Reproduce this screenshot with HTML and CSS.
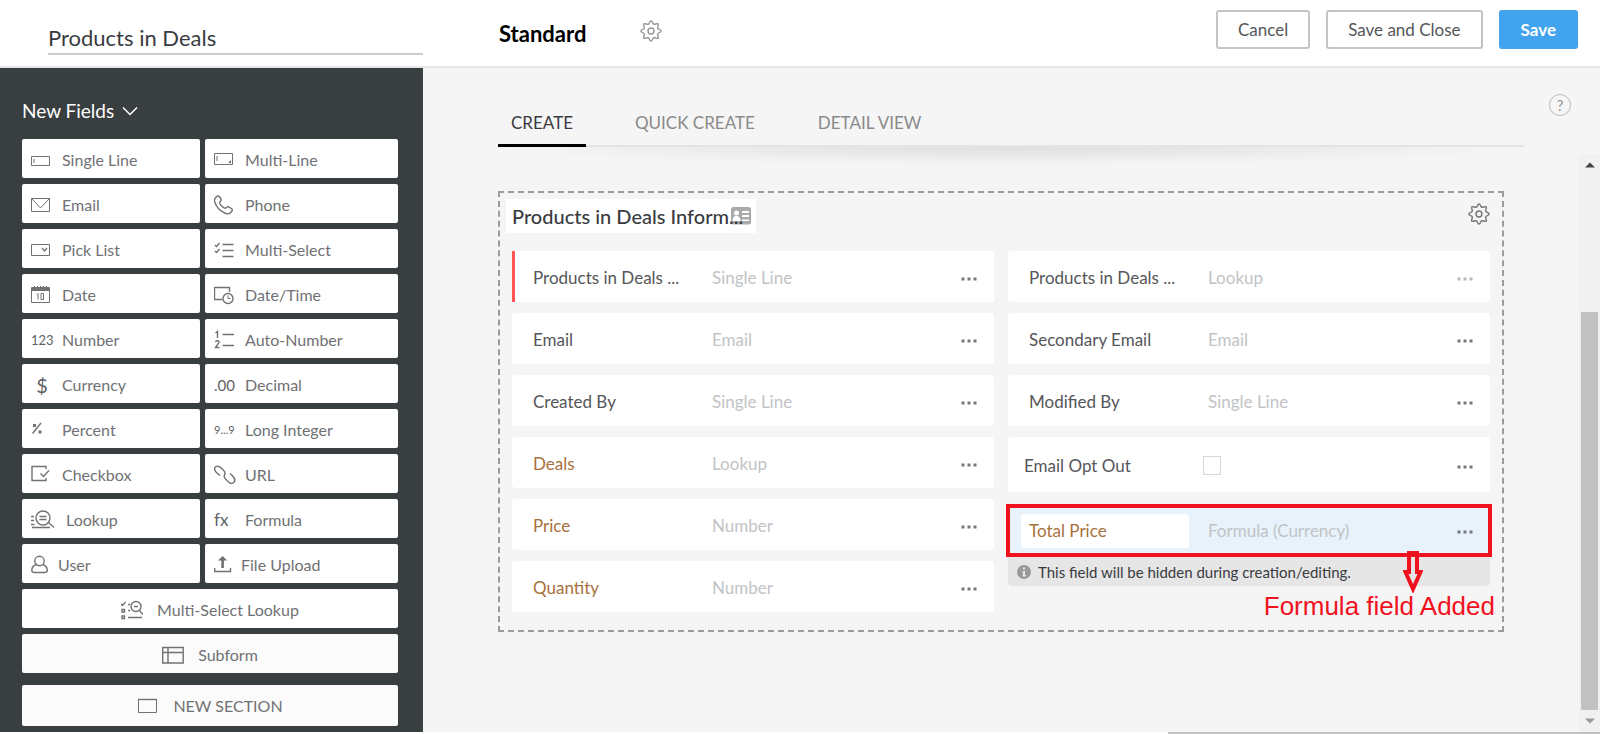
FILE: index.html
```html
<!DOCTYPE html>
<html lang="en">
<head>
<meta charset="utf-8">
<meta name="viewport" content="width=device-width, initial-scale=1">
<title>Products in Deals - Layout Editor</title>
<link rel="stylesheet" href="styles.css">
</head>
<body>

<svg class="defs" width="0" height="0" aria-hidden="true">
	<symbol id="gear" viewBox="0 0 24 24">
		<path d="M10.240 2.970Q12-1 13.760 2.970Q14.680 5.530 17.140 4.370Q21.190 2.810 19.630 6.860Q18.470 9.320 21.030 10.240Q25 12 21.030 13.760Q18.470 14.680 19.630 17.140Q21.190 21.190 17.140 19.630Q14.680 18.470 13.760 21.030Q12 25 10.240 21.030Q9.320 18.470 6.860 19.630Q2.810 21.190 4.370 17.140Q5.530 14.680 2.970 13.760Q-1 12 2.970 10.240Q5.530 9.320 4.370 6.860Q2.810 2.810 6.860 4.370Q9.320 5.530 10.240 2.970z"/>
		<circle cx="12" cy="12" r="3.200"/>
	</symbol>
	<symbol id="dots" viewBox="0 0 16 4">
		<path d="M.5.5h3v3h-3zM6.500.5h3v3h-3zM12.500.5h3v3h-3z"/>
	</symbol>
</svg>

<header class="header">
	<div class="name_box">
		<input class="module_name" type="text" value="Products in Deals" aria-label="Module name">
	</div>
	<div class="layout_name">
		<h1>Standard</h1>
		<button class="gear" type="button" aria-label="Layout settings"><svg><use href="#gear"/></svg></button>
	</div>
	<div class="actions">
		<button class="btn" type="button">Cancel</button>
		<button class="btn" type="button">Save and Close</button>
		<button class="btn btn_save" type="button">Save</button>
	</div>
</header>

<div class="page">
	<aside class="sidebar">
		<button class="new_fields" type="button">New Fields
			<svg width="16" height="10" viewBox="0 0 16 10"><path d="M1 1.500l7 7 7-7"/></svg>
		</button>
		<div class="fields">
			<button class="field" type="button">
				<svg class="icon" viewBox="0 0 22 20"><path d="M.5 6.500h18v9H.5zM3 9v4"/></svg>Single Line</button>
			<button class="field" type="button">
				<svg class="icon" viewBox="0 0 22 20"><path d="M.5 3.500h18v11H.5zM3 6v5"/><path class="fill" d="M17 10v3h-3z"/></svg>Multi-Line</button>

			<button class="field" type="button">
				<svg class="icon" viewBox="0 0 22 20"><path d="M.5 3.500h18v13H.5zL9.500 13l9-9.500"/></svg>Email</button>
			<button class="field" type="button">
				<svg class="icon" viewBox="0 0 22 20"><path class="bold" d="M3 1.300C5 0 6.400 3 7.200 4.600c.6 1.300-1.900 2-1.600 3.300.6 2 3.300 4.700 5.200 5.300 1.300.4 2-2 3.300-1.500 1.700.8 5.200 2.300 4 4.200-1.400 2.300-3.600 3.600-6.200 2.600C6.500 16.500 2.600 12.500.8 7.300-.1 4.700 1 2.600 3 1.300z"/></svg>Phone</button>

			<button class="field" type="button">
				<svg class="icon" viewBox="0 0 22 20"><path d="M.5 4.500h18v11H.5z"/><path class="bold" d="M11 8l2.500 3L16 8"/></svg>Pick List</button>
			<button class="field" type="button">
				<svg class="icon" viewBox="0 0 22 20"><path class="bold" d="M8.500 4.500h11M8.500 10.500h11M8.500 16.500h11M1 5l1.500 1.500L5.500 3M1 11l1.500 1.500L5.500 9"/></svg>Multi-Select</button>

			<button class="field" type="button">
				<svg class="icon" viewBox="0 0 22 20"><path d="M.5 2.500h18v15H.5zM7 8.500v6M6 9.500l1-1M10 8.500h2.500v6H10z"/><path class="fill" d="M0 3h19v3H0z"/><path d="M3.500 1v3M6.500 1v3M9.500 1v3M12.500 1v3M15.500 1v3"/></svg>Date</button>
			<button class="field" type="button">
				<svg class="icon" viewBox="0 0 22 20"><path class="bold" d="M15.500 7V2.500H.5v12H8M0 2.500h16"/><circle class="bold" cx="14" cy="13.500" r="5"/><path d="M14 10.500v3h2.500"/></svg>Date/Time</button>

			<button class="field" type="button"><span class="icon glyph">123</span>Number</button>
			<button class="field" type="button">
				<svg class="icon" viewBox="0 0 22 20"><path class="bold" d="M8.500 4.500H20M8.500 15.500H20M1.500 3l2-1.500V8M1.500 12c.5-2 4-1.500 3.500.5L1.500 17.500h4"/></svg>Auto-Number</button>

			<button class="field" type="button"><span class="icon glyph glyph_big">$</span>Currency</button>
			<button class="field" type="button"><span class="icon glyph glyph_mid">.00</span>Decimal</button>

			<button class="field" type="button">
				<svg class="icon" viewBox="0 0 22 20"><path class="bold" d="M1.500 13.500L10 3"/><path class="fill" d="M2 4h3v3H2zM7.500 10.500h3v3h-3z"/></svg>Percent</button>
			<button class="field" type="button"><span class="icon glyph glyph_small">9...9</span>Long Integer</button>

			<button class="field" type="button">
				<svg class="icon" viewBox="0 0 22 20"><path class="bold" d="M15 4V1.500H1v14h14V13M9.500 8.500l3 3 5.500-6"/></svg>Checkbox</button>
			<button class="field" type="button">
				<svg class="icon" viewBox="0 0 22 20"><path class="bold" d="M6 10.500C3 8.500-1 5 1.200 2.200c2.800-3 6 .8 8.300 3 2.200 2 1.800 4.300.3 5.300M16 8.500c3 2.500 6.500 5.500 4 8.800-3 3-6-.8-8.300-3-2.200-2-1.800-4.300-.3-5.300"/></svg>URL</button>

			<button class="field" type="button">
				<svg class="icon icon_wide" viewBox="0 0 26 20"><path class="bold" d="M0 6.500h3M0 10.500h3M0 14.500h3.500M1 17.500h18M17.500 12.500l5.500 5M8.500 6.500h7M8.500 9.500h7"/><circle class="bold" cx="12" cy="8" r="7"/></svg>Lookup</button>
			<button class="field" type="button"><span class="icon glyph glyph_fx">fx</span>Formula</button>

			<button class="field" type="button">
				<svg class="icon icon_narrow" viewBox="0 0 18 20"><circle class="bold" cx="8.500" cy="6" r="4.700"/><path class="bold" d="M5.500 9.500C2 10.500.8 13 .8 15.500c0 1.500 1.500 2 3 2h9.500c1.500 0 3-.5 3-2 0-2.500-1.300-5-4.800-6"/></svg>User</button>
			<button class="field" type="button">
				<svg class="icon icon_narrow" viewBox="0 0 18 20"><path class="bold" d="M.7 13v3.500h15.800V13"/><path class="fill" d="M4 5.500L8.600 1l4.600 4.500zM7.300 4h2.600v9H7.300z"/></svg>File Upload</button>

			<button class="field field_full" type="button">
				<svg class="icon" viewBox="0 0 22 20"><path class="bold" d="M0 4l1.500 1.500L4.500 2M7 4.500h2M7 10.500h2M1 9.500h2.500V12H1zM1 16h2.500v2.500H1zM7 17.500h14M18.500 10.500l3.500 4M13 6.500h4"/><circle class="bold" cx="15" cy="6.500" r="5"/></svg>Multi-Select Lookup</button>
			<button class="field field_full field_pale" type="button">
				<svg class="icon" viewBox="0 0 22 20"><path class="bold" d="M.7 2.500h20.500v15.500H.7zM.7 7.500h20.500M6 2.500V18"/></svg>Subform</button>
		</div>
		<button class="field field_full field_pale new_section" type="button">
			<svg class="icon" viewBox="0 0 22 20"><path d="M1.500 3.500h18v13h-18z"/><path class="bold" d="M1 3.500h19"/></svg>NEW SECTION</button>
	</aside>

	<main class="main">
		<div class="top">
			<nav class="tabs">
				<button class="tab active" type="button">CREATE</button>
				<button class="tab" type="button">QUICK CREATE</button>
				<button class="tab" type="button">DETAIL VIEW</button>
			</nav>
			<button class="help" type="button" aria-label="Help">?</button>
		</div>

		<div class="scroll_area">
			<section class="section">
				<div class="section_head">
					<h2>Products in Deals Inform...
						<svg class="card_icon" width="20" height="18" viewBox="0 0 20 18"><rect width="20" height="17.500" rx="2.500" fill="#a9aaab"/><circle cx="5.500" cy="6" r="2.500" fill="#fff"/><path d="M1.500 14c0-3 1.500-4 2.500-5h3c1 1 2.500 2 2.500 5zM11 4h7v2h-7zM11 8h7v2h-7zM11 12.500h7v1.500h-7z" fill="#fff"/></svg>
					</h2>
					<button class="gear gear_dark" type="button" aria-label="Section settings"><svg><use href="#gear"/></svg></button>
				</div>

				<div class="columns">
					<div class="column">
						<div class="item required"><span class="label">Products in Deals ...</span><span class="type">Single Line</span><button class="more" type="button" aria-label="More"><svg><use href="#dots"/></svg></button></div>
						<div class="item"><span class="label">Email</span><span class="type">Email</span><button class="more" type="button" aria-label="More"><svg><use href="#dots"/></svg></button></div>
						<div class="item"><span class="label">Created By</span><span class="type">Single Line</span><button class="more" type="button" aria-label="More"><svg><use href="#dots"/></svg></button></div>
						<div class="item custom"><span class="label">Deals</span><span class="type">Lookup</span><button class="more" type="button" aria-label="More"><svg><use href="#dots"/></svg></button></div>
						<div class="item custom"><span class="label">Price</span><span class="type">Number</span><button class="more" type="button" aria-label="More"><svg><use href="#dots"/></svg></button></div>
						<div class="item custom"><span class="label">Quantity</span><span class="type">Number</span><button class="more" type="button" aria-label="More"><svg><use href="#dots"/></svg></button></div>
					</div>

					<div class="column">
						<div class="item"><span class="label">Products in Deals ...</span><span class="type">Lookup</span><button class="more more_off" type="button" aria-label="More"><svg><use href="#dots"/></svg></button></div>
						<div class="item"><span class="label">Secondary Email</span><span class="type">Email</span><button class="more" type="button" aria-label="More"><svg><use href="#dots"/></svg></button></div>
						<div class="item"><span class="label">Modified By</span><span class="type">Single Line</span><button class="more" type="button" aria-label="More"><svg><use href="#dots"/></svg></button></div>
						<div class="item item_check"><label class="label" for="opt_out">Email Opt Out</label><span class="type"><input type="checkbox" id="opt_out"></span><button class="more" type="button" aria-label="More"><svg><use href="#dots"/></svg></button></div>
						<div class="formula">
							<div class="item custom selected"><span class="label">Total Price</span><span class="type">Formula (Currency)</span><button class="more" type="button" aria-label="More"><svg><use href="#dots"/></svg></button></div>
							<p class="note">
								<svg width="14" height="14" viewBox="0 0 14 14"><circle cx="7" cy="7" r="7" fill="#999"/><path d="M6 2.500h2v2H6zM5.500 6H8v4h1v1.500H5.500V10H6V7.500h-.5z" fill="#e6e6e6"/></svg>
								This field will be hidden during creation/editing.
							</p>
							<div class="callout">
								<svg width="20" height="42" viewBox="0 0 20 42"><path d="M6 1.500v19.500H2.500L10 38l7.500-17H14V1.500z"/></svg>
								<span>Formula field Added</span>
							</div>
						</div>
					</div>
				</div>
			</section>

			<div class="scrollbar">
				<svg width="10" height="6" viewBox="0 0 10 6"><path d="M0 5.500L5 .5l5 5z" fill="#444"/></svg>
				<div class="thumb"></div>
				<svg width="10" height="6" viewBox="0 0 10 6"><path d="M0 .5h10l-5 5z" fill="#999"/></svg>
			</div>
		</div>
	</main>
</div>

<div class="bottom_bar"></div>

</body>
</html>
```
FILE: styles.css
```css
* { box-sizing: border-box; }
body { margin: 0; min-height: 100vh; display: flex; flex-direction: column; background: #f5f5f5; color: #55565a; font: 16px/20px Lato, "Open Sans", sans-serif; }
h1, h2, p { margin: 0; }
button { margin: 0; padding: 0; border: 0; background: none; color: inherit; font: inherit; cursor: pointer; }
svg { display: block; fill: none; stroke: none; }
.defs { position: absolute; }

/* header */
.header { display: flex; height: 68px; background: #fff; border-bottom: 2px solid #e6e6e6; }
.name_box { width: 423px; padding: 22px 0 0 48px; }
.module_name { width: 100%; height: 33px; padding: 0; border: 0; border-bottom: 2px solid #ccc; outline: 0; background: none; color: #3a3b40; font: 22px/30px Lato, sans-serif; }
.layout_name { flex: 1; display: flex; gap: 54px; padding: 20px 0 0 76px; }
.layout_name h1 { color: #000; font-size: 22px; line-height: 28px; font-weight: 700; }
.gear { width: 22px; height: 22px; }
.gear svg { width: 22px; height: 22px; stroke: #999; stroke-width: 1.6; stroke-linejoin: round; }
.gear_dark svg { stroke: #777; }
.actions { display: flex; gap: 16px; padding: 10px 22px 0 0; }
.btn { height: 39px; padding: 0 20px; border: 2px solid #c4c4c4; border-radius: 3px; background: #fff; color: #55565a; font-size: 17px; }
.btn_save { border-color: #42a3ee; background: #42a3ee; color: #fff; font-weight: 700; }

.page { flex: 1; display: flex; }

/* sidebar */
.sidebar { width: 423px; padding: 31px 25px 6px 22px; background: #393e40; }
.new_fields { display: flex; align-items: center; gap: 8px; height: 24px; margin-bottom: 16px; color: #fff; font-size: 19px; }
.new_fields svg { stroke: #fff; stroke-width: 1.5; }
.fields { display: grid; grid-template-columns: 178fr 193fr; gap: 6px 5px; }
.field { display: flex; align-items: center; gap: 9px; height: 39px; padding: 2px 9px 0; border-radius: 2px; background: #fff; color: #707174; font-size: 16px; white-space: nowrap; }
.field_full { grid-column: 1 / 3; justify-content: center; gap: 14px; }
.field_pale { background: #fbfbfb; }
.new_section { width: 100%; height: 41px; margin-top: 12px; padding: 0; }
.icon { flex: none; width: 22px; height: 20px; stroke: #707174; stroke-width: 1; }
.icon .bold { stroke-width: 1.4; }
.icon .fill { fill: #707174; stroke: none; }
.icon_wide { width: 26px; }
.icon_narrow { width: 18px; }
.glyph { color: #606164; font-size: 13px; text-align: left; }
.glyph_big { font-size: 20px; text-align: center; }
.glyph_mid { font-size: 15px; }
.glyph_fx { font-size: 17px; }
.glyph_small { font-size: 11px; }

/* tabs */
.main { flex: 1; display: flex; flex-direction: column; min-width: 0; }
.top { display: flex; justify-content: space-between; padding: 26px 29px 0 75px; height: 86px; }
.tabs { position: relative; flex: 1; display: flex; gap: 26px; height: 53px; border-bottom: 2px solid #e4e4e4; }
.tabs:after { content: ""; position: absolute; top: 53px; left: 0; right: 0; height: 18px; background: radial-gradient(50% 100% at 50% 0, #dedede, #f5f5f500); pointer-events: none; }
.tab { height: 53px; padding: 4px 13px 0; color: #8a8a8a; font-size: 17px; }
.tab + .tab { padding: 4px 14px 0 23px; }
.tab.active { box-shadow: inset 0 -3px #000; color: #3a3b40; }
.help { width: 22px; height: 22px; margin-left: 25px; border: 1px solid #bbb; border-radius: 11px; color: #999; font-size: 15px; line-height: 18px; }

/* section */
.scroll_area { flex: 1; display: flex; justify-content: space-between; gap: 75px; padding-left: 75px; }
.section { flex: 1; align-self: flex-start; margin-top: 37px; padding: 6px 12px 18px 12px; border: 2px dashed #9c9c9c; }
.section_head { display: flex; justify-content: space-between; align-items: flex-start; padding-bottom: 18px; }
.section_head h2 { position: relative; z-index: 0; width: 250px; height: 34px; margin-left: -6px; padding: 0 6px; background: #fff; color: #3a3b40; font-size: 20px; line-height: 34px; font-weight: 500; white-space: nowrap; }
.card_icon { position: absolute; right: 5px; top: 8px; z-index: -1; }
.section_head .gear { margin-top: 4px; }
.columns { display: grid; grid-template-columns: 1fr 1fr; gap: 14px; }
.column { display: flex; flex-direction: column; gap: 11px; }
.item { display: flex; align-items: center; height: 51px; padding: 2px 17px 0 21px; border-radius: 4px; background: #fff; font-size: 17px; }
.item .label { width: 179px; white-space: nowrap; }
.item .type { flex: 1; color: #c2c3c5; }
.more { width: 16px; height: 20px; padding-top: 2px; }
.more svg { width: 16px; height: 4px; fill: #77787b; }
.more_off { opacity: 0.5; }
.required { padding-left: 18px; border-left: 3px solid #f55; border-radius: 0; }
.custom .label { color: #a8703c; }
.item_check { height: 55px; padding-left: 16px; }
.item_check input { appearance: none; display: block; width: 18px; height: 19px; margin: 0; border: 1px solid #d6d6d6; background: #fff; }

/* formula field with its note */
.formula { position: relative; }
.selected { height: 53px; margin: 1px -2px 0; padding: 0 15px 0 11px; border: 4px solid #f0121e; border-radius: 0; background: #e7f2fb; }
.selected .label { width: 168px; height: 34px; padding-left: 8px; border-radius: 3px; background: #fff; line-height: 34px; }
.selected .type { padding-left: 19px; }
.note { display: flex; align-items: center; gap: 7px; height: 29px; padding-left: 9px; border-radius: 0 0 4px 4px; background: #e6e6e6; color: #3a3b40; font-size: 15px; }
.callout { position: absolute; top: 48px; right: -5px; display: flex; flex-direction: column; color: #f0121e; font: 26px/26px "Liberation Sans", Arial, sans-serif; white-space: nowrap; }
.callout svg { align-self: flex-end; margin-right: 72px; stroke: #f0121e; stroke-width: 4; }

/* scrollbar */
.scrollbar { width: 21px; display: flex; flex-direction: column; align-items: center; padding: 8px 0; background: #f1f1f1; }
.thumb { flex: 1; width: 17px; margin: 144px 0 8px; background: #c1c1c1; }

.bottom_bar { height: 2px; background: linear-gradient(90deg, #fff 73%, #c1c1c1 73%); }
```
